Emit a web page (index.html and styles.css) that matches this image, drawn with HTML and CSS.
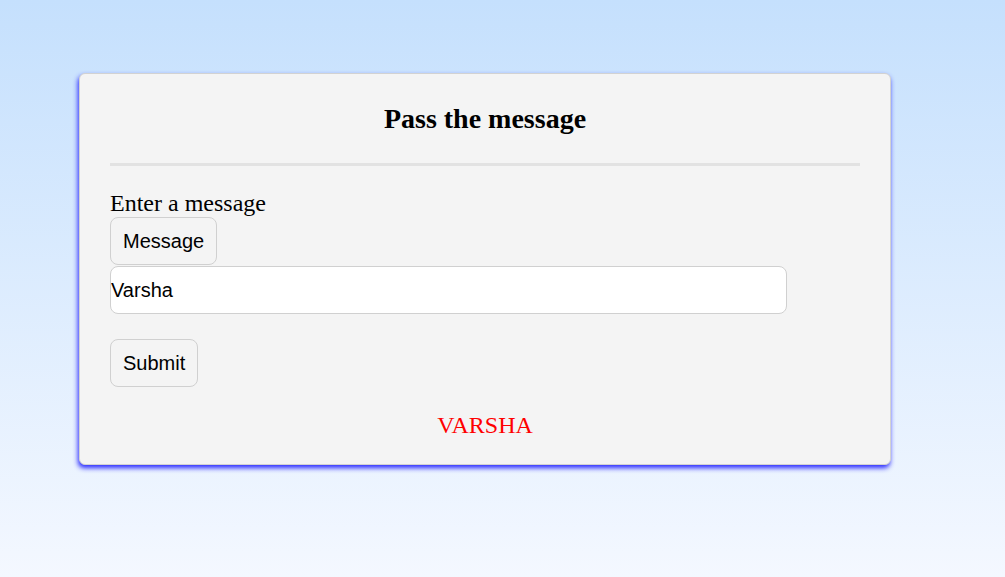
FILE: index.html
```html
<!DOCTYPE html>
<html>
<head>
<meta charset="utf-8">
<title>Pass the message</title>
<link rel="stylesheet" href="styles.css">
</head>
<body>
<div class="page">
  <div class="card">
    <h2 class="title">Pass the message</h2>
    <div class="rule"></div>
    <label class="label" for="msg">Enter a message</label>
    <button class="btn">Message</button>
    <input id="msg" class="field" type="text" value="Varsha">
    <button class="btn submit">Submit</button>
    <p class="result">VARSHA</p>
  </div>
</div>
</body>
</html>
```
FILE: styles.css
```css
html, body {
  margin: 0;
  padding: 0;
  height: 100%;
}
body {
  background: linear-gradient(to bottom, #c5e0fd 0%, #f4f8ff 100%);
  font-family: "Liberation Serif", "Times New Roman", serif;
}
.page {
  padding-top: 73px;
  padding-left: 79px;
}
.card {
  width: 750px;
  padding: 29px 30px 25px 30px;
  background: #f4f4f4;
  border: 1px solid #d2d2d2;
  border-radius: 6px;
  box-shadow: -1px 3px 5px rgba(30, 30, 255, 0.95);
  display: flex;
  flex-direction: column;
  align-items: flex-start;
}
.title {
  align-self: stretch;
  margin: 0;
  text-align: center;
  font-size: 28px;
  line-height: 31px;
  font-weight: bold;
  color: #000;
}
.rule {
  align-self: stretch;
  height: 3px;
  background: #e2e2e2;
  margin-top: 29px;
}
.label {
  margin-top: 24px;
  font-size: 24px;
  line-height: 27px;
  color: #000;
}
.btn {
  font-family: "Liberation Sans", Arial, sans-serif;
  font-size: 20px;
  line-height: 22px;
  padding: 12px;
  background: #f4f4f4;
  border: 1px solid #d0d0d0;
  border-radius: 8px;
  color: #000;
  height: 48px;
  box-sizing: border-box;
}
.field {
  margin-top: 1px;
  width: 677px;
  height: 48px;
  box-sizing: border-box;
  padding: 0;
  font-family: "Liberation Sans", Arial, sans-serif;
  font-size: 20px;
  color: #000;
  background: #fff;
  border: 1px solid #d0d0d0;
  border-radius: 8px;
  outline: none;
}
.submit {
  margin-top: 25px;
}
.result {
  align-self: stretch;
  margin: 25px 0 0 0;
  text-align: center;
  font-size: 24px;
  line-height: 27px;
  color: #ff0000;
}
```
